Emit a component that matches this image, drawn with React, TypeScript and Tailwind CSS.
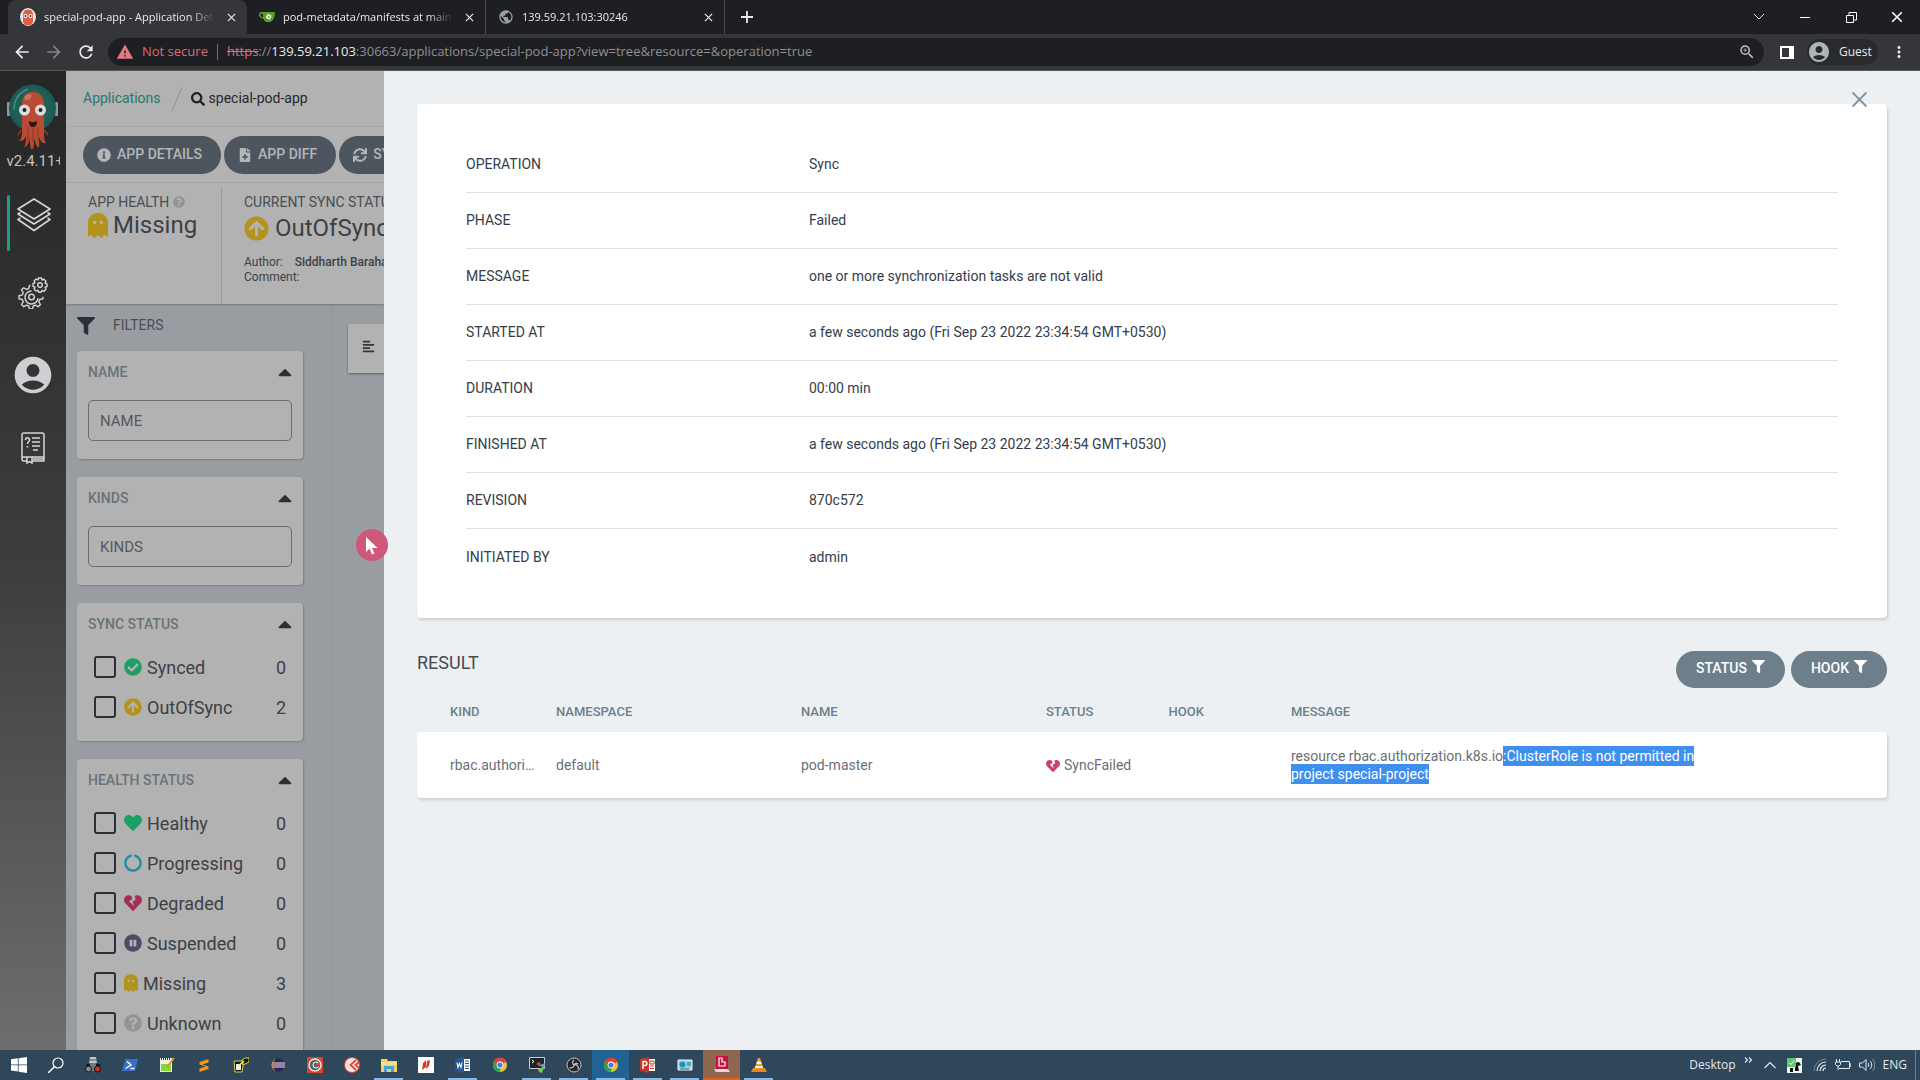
import type { ReactNode } from 'react'
import clsx from 'clsx'
import {
  FaAlignLeft,
  FaArrowCircleUp,
  FaCaretUp,
  FaCheckCircle,
  FaCircleNotch,
  FaFileMedical,
  FaFilter,
  FaGhost,
  FaHeart,
  FaHeartBroken,
  FaInfoCircle,
  FaPauseCircle,
  FaQuestionCircle,
  FaSearch,
  FaSync,
} from 'react-icons/fa'
import { MdAccountCircle, MdArrowBack, MdArrowForward, MdMoreVert, MdPublic, MdRefresh, MdWarning, MdZoomIn } from 'react-icons/md'

/* ---------- browser chrome ---------- */

function ArgoLogo({ className }: { className?: string }) {
  return (
    <svg viewBox="0 0 52 66" className={className} aria-hidden="true">
      <rect x="0" y="19" width="3" height="14" rx="1" fill="#8b999d" />
      <rect x="48" y="19" width="3" height="14" rx="1" fill="#8b999d" />
      <circle cx="25.500" cy="25" r="23.500" fill="#1c5a58" />
      <circle cx="25.500" cy="25" r="20" fill="#1f5f58" />
      <path d="M7 27C7 16 13 9 21 6" stroke="#4f8886" strokeWidth="1.500" fill="none" />
      <path
        d="M26 9c-8 0-11 6-11 13v27c0 5-1 7-3 9 4 0 6-2 7-5 0 5 0 8-2 11 4-1 5-5 6-9 0 4 0 8 1 11h2c1-3 1-7 1-11 1 4 2 7 4 10 2-2 1-6 1-11 2 5 4 7 7 6-2-2-2-6-2-11V22c0-7-3-13-11-13z"
        fill="#b94a34"
      />
      <path d="M14 47l-3 5M37 47l4 5M21 44v14M26 45v14M31 44v14" stroke="#9a3c2b" strokeWidth="1.400" />
      <ellipse cx="21" cy="14" rx="4" ry="2.500" fill="#cf705b" transform="rotate(-30 21 14)" />
      <circle cx="17.500" cy="27" r="5.500" fill="#dcdcdc" />
      <circle cx="33.500" cy="27" r="5.500" fill="#dcdcdc" />
      <circle cx="17.500" cy="27" r="2" fill="#222" />
      <circle cx="33.500" cy="27" r="2" fill="#222" />
      <path d="M22 38c2 1.500 6 1.500 8 0 0 4-1.500 6-4 6s-4-2-4-6z" fill="#2a1512" />
    </svg>
  )
}

function FaviconArgo() {
  return (
    <svg viewBox="0 0 16 20" className="w-4 h-5 shrink-0" aria-hidden="true">
      <ellipse cx="8" cy="10" rx="8" ry="9" fill="#e9e3e1" />
      <path d="M8 2.500c-4 0-5 3-5 6V15l2 3h6l2-3V8.500c0-3-1-6-5-6z" fill="#df5f45" />
      <circle cx="5.500" cy="9" r="2" fill="#fff" />
      <circle cx="10.500" cy="9" r="2" fill="#fff" />
      <circle cx="5.500" cy="9" r="1" fill="#333" />
      <circle cx="10.500" cy="9" r="1" fill="#333" />
    </svg>
  )
}

function FaviconGitea() {
  return (
    <svg viewBox="0 0 16 16" className="w-4 h-4 shrink-0" aria-hidden="true">
      <path d="M3.500 3H15c.8 0 1 .5 1 1.200C15.500 9 13.500 13 10.500 13H8C6 13 5 11.500 4.500 9.800 1.500 9.500 0 7.500 0 5.500S1.500 3 3.500 3zM3.800 4.700C2.300 4.500 1.500 5 1.600 6s1 2 2.500 2.200z" fill="#5c9e2a" />
      <rect x="7.500" y="5.500" width="4.500" height="4.500" rx="1" fill="#fff" transform="rotate(25 9.700 7.700)" />
      <circle cx="9.800" cy="8" r="1" fill="#5c9e2a" />
    </svg>
  )
}

function CloseIcon({ className }: { className?: string }) {
  return (
    <svg viewBox="0 0 10 10" className={className} fill="none" stroke="currentColor" aria-hidden="true">
      <path d="M1 1l8 8M9 1l-8 8" strokeWidth="1.300" />
    </svg>
  )
}

function Tab({ icon, title, active, divider }: { icon: ReactNode; title: string; active?: boolean; divider?: boolean }) {
  return (
    <div
      className={clsx(
        'flex items-center h-[34px] w-[239px] pl-3 pr-[7px] gap-2 text-[#e8eaed]',
        active && 'bg-[#35363a] rounded-t-lg',
        divider && 'border-r border-[#4a4b4f]'
      )}
    >
      {icon}
      <span className="flex-1 overflow-hidden whitespace-nowrap text-[11px] [mask-image:linear-gradient(to_right,black_85%,transparent)]">
        {title}
      </span>
      <button type="button" aria-label="Close tab" className="p-1">
        <CloseIcon className="size-[9px]" />
      </button>
    </div>
  )
}

function BrowserBar() {
  return (
    <header className="shrink-0 font-['Open_Sans',sans-serif] bg-[#1e1f22]">
      <div className="flex items-center h-[34px] pl-2 text-[#e8eaed]">
        <Tab active icon={<FaviconArgo />} title="special-pod-app - Application Details" />
        <Tab divider icon={<FaviconGitea />} title="pod-metadata/manifests at main" />
        <Tab divider icon={<MdPublic className="size-4 text-[#9aa0a6]" />} title="139.59.21.103:30246" />
        <button type="button" aria-label="New tab" className="p-4">
          <svg viewBox="0 0 12 12" className="size-3" stroke="currentColor" strokeWidth="1.800" aria-hidden="true">
            <path d="M6 0v12M0 6h12" />
          </svg>
        </button>
        <div className="ml-auto flex items-center">
          <button type="button" aria-label="Search tabs" className="w-[46px] flex justify-center">
            <svg viewBox="0 0 12 8" className="w-3 h-2" fill="none" stroke="currentColor" aria-hidden="true">
              <path d="M1 1l5 5 5-5" />
            </svg>
          </button>
          <button type="button" aria-label="Minimize" className="w-[46px] flex justify-center">
            <span className="w-[10px] h-px bg-white" />
          </button>
          <button type="button" aria-label="Restore" className="w-[46px] flex justify-center">
            <svg viewBox="0 0 11 11" className="size-[11px]" fill="none" stroke="#fff" aria-hidden="true">
              <path d="M.5 3.500h7v7h-7zM3 3V.5h7.500v7.500H8" />
            </svg>
          </button>
          <button type="button" aria-label="Close" className="w-[46px] flex justify-center">
            <CloseIcon className="size-3 text-white" />
          </button>
        </div>
      </div>

      <div className="flex items-center h-[37px] bg-[#35363a] border-b border-[#55565a] text-[#e8eaed] pl-3">
        <button type="button" aria-label="Back"><MdArrowBack className="size-5" /></button>
        <button type="button" aria-label="Forward" className="ml-3 text-[#85878b]"><MdArrowForward className="size-5" /></button>
        <button type="button" aria-label="Reload" className="ml-3"><MdRefresh className="size-5" /></button>
        <div className="flex-1 flex items-center h-7 ml-3 pl-2 pr-2 rounded-full bg-[#1e1f22] text-[13px]">
          <MdWarning className="size-[18px] text-[#e47883]" />
          <span className="ml-2 text-[#dd6a79]">Not secure</span>
          <span className="mx-[9px] h-4 w-px bg-[#6b6c70]" />
          <span className="text-[#8d9095] whitespace-nowrap">
            <span className="text-[#dd6a79] line-through">https</span>://
            <span className="text-[#e8eaed]">139.59.21.103</span>
            :30663/applications/special-pod-app?view=tree&amp;resource=&amp;operation=true
          </span>
          <MdZoomIn className="size-[18px] ml-auto text-[#bdc1c6]" />
        </div>
        <span className="ml-4 w-[14px] h-[13px] border-2 border-r-[5px] border-white" />
        <div className="flex items-center gap-2 h-[26px] w-[71px] ml-[13px] rounded-full bg-[#292a2d] text-[12px]">
          <MdAccountCircle className="size-6 text-[#b0b4ba]" />
          Guest
        </div>
        <button type="button" aria-label="Menu" className="mx-3"><MdMoreVert className="size-[18px]" /></button>
      </div>
    </header>
  )
}

/* ---------- argo sidebar ---------- */

function LayersIcon() {
  return (
    <svg viewBox="0 0 34 34" className="size-[34px]" fill="none" stroke="#d6d6d6" strokeWidth="1.600" strokeLinejoin="round" aria-hidden="true">
      <path d="M17 1L33 11 17 21 1 11z" />
      <path d="M3.500 14.500L1 16l16 10 16-10-2.500-1.500" />
      <path d="M3.500 20L1 21.500l16 11 16-11L30.500 20" />
    </svg>
  )
}

function GearsIcon() {
  return (
    <svg viewBox="0 0 32 32" className="size-8" fill="none" stroke="#d6d6d6" strokeWidth="1.400" strokeLinejoin="round" aria-hidden="true">
      <path d="M13.500 8.500h-1l-.8 3-2.200.9-2.700-1.600L4.500 13l1.700 2.700-.9 2.200-3.300.8v3l3.300.8.9 2.300-1.700 2.700 2.300 2.200 2.700-1.600 2.200.9.800 3h3l.8-3 2.200-.9 2.700 1.600 2.300-2.200-1.700-2.700.9-2.300 3.300-.8v-2" />
      <path d="M14.500 14a6.500 6.500 0 106.500 7" />
      <circle cx="14.500" cy="20" r="2.800" />
      <path d="M21.500 1h3l.5 2 2-.8 2 2-1 1.800 2 1v2.500l-2 .8 1 2-2 2-2-1-.8 2h-2.500l-.7-2-2 .8-2-2 1-1.900-2-.8V6.500l2-.7-.9-1.900 2-1.900 1.900 1z" />
      <circle cx="23" cy="8" r="2.300" />
    </svg>
  )
}

function BookIcon() {
  return (
    <svg viewBox="0 0 24 32" className="w-6 h-8" fill="none" stroke="#d6d6d6" strokeWidth="1.500" aria-hidden="true">
      <path d="M6 29H3a2 2 0 01-2-2V3a2 2 0 012-2h18a2 2 0 012 2v26H11M1 25h22M6 25v6l2.500-1.500L11 31v-6M12 27h11" />
      <path d="M11 6h8M11 10h8M11 14h8M12 18h5" />
      <path d="M4.500 8c0-3 4-3 4 0 0 2-2 1.600-2 4M6.500 14v1.500" />
    </svg>
  )
}

function Sidebar() {
  return (
    <nav className="w-[66px] shrink-0 flex flex-col items-center pt-3 bg-linear-to-b from-[#262626] via-[#3d3d3d] to-[#6e6e6e] text-[#c4c4c4]">
      <ArgoLogo className="w-[52px] h-[66px]" />
      <span className="w-[53px] overflow-hidden whitespace-nowrap text-[15px] leading-6">v2.4.11+</span>
      <a href="#applications" aria-label="Applications" className="mt-[22px] w-full h-14 pl-[7px] pr-[9px] flex">
        <span className="w-[3px] h-14 bg-[#1f9d8a] rounded-sm" />
        <span className="flex-1 flex justify-center pt-[3px]"><LayersIcon /></span>
      </a>
      <a href="#settings" aria-label="Settings" className="mt-[26px]"><GearsIcon /></a>
      <a href="#user" aria-label="User info" className="mt-[44px]"><MdAccountCircle className="size-[44px] text-[#cfcfd3]" /></a>
      <a href="#docs" aria-label="Documentation" className="mt-[35px]"><BookIcon /></a>
    </nav>
  )
}

/* ---------- application page behind the panel ---------- */

function ToolButton({ icon, children }: { icon: ReactNode; children: ReactNode }) {
  return (
    <button
      type="button"
      className="shrink-0 flex items-center gap-[6px] h-[38px] pl-[14px] pr-[19px] rounded-full bg-[#4d565f] text-[#b4b6b8] text-[14px] font-medium whitespace-nowrap"
    >
      {icon}
      {children}
    </button>
  )
}

function FilterCard({ title, children, className }: { title: string; children: ReactNode; className?: string }) {
  return (
    <section className={clsx('bg-[#b2b2b2] rounded shadow-[1px_1px_2px_rgba(0,0,0,0.2)] px-[11px] pt-3', className)}>
      <div className="flex items-center justify-between h-[18px]">
        <h3 className="text-[14px] font-medium text-[#68727a]">{title}</h3>
        <button type="button" aria-label={`Collapse ${title}`}>
          <FaCaretUp className="size-[22px] -mr-1 text-[#2c2f3a]" />
        </button>
      </div>
      {children}
    </section>
  )
}

function FilterInput({ name }: { name: string }) {
  return (
    <input
      aria-label={name}
      placeholder={name}
      className="block w-full h-[41px] mt-[19px] px-[11px] rounded-[5px] border border-[#6a6c6e] bg-transparent text-[15px] placeholder:text-[#54585c]"
    />
  )
}

type Option = { label: string; count: number; icon: ReactNode }

const syncOptions: Option[] = [
  { label: 'Synced', count: 0, icon: <FaCheckCircle className="size-[18px] text-[#1ba163]" /> },
  { label: 'OutOfSync', count: 2, icon: <FaArrowCircleUp className="size-[18px] text-[#b3931c]" /> },
]

const healthOptions: Option[] = [
  { label: 'Healthy', count: 0, icon: <FaHeart className="size-[18px] text-[#1ba163]" /> },
  { label: 'Progressing', count: 0, icon: <FaCircleNotch className="size-[18px] text-[#1a8c9c]" /> },
  { label: 'Degraded', count: 0, icon: <FaHeartBroken className="size-[18px] text-[#a32f55]" /> },
  { label: 'Suspended', count: 0, icon: <FaPauseCircle className="size-[18px] text-[#4f4a68]" /> },
  { label: 'Missing', count: 3, icon: <FaGhost className="w-[14px] h-[18px] text-[#b3931c]" preserveAspectRatio="none" /> },
  { label: 'Unknown', count: 0, icon: <FaQuestionCircle className="size-[18px] text-[#8f9499]" /> },
]

function OptionList({ options }: { options: Option[] }) {
  return (
    <div className="pt-[14px] pl-[6px] pr-[6px]">
      {options.map((o) => (
        <label key={o.label} className="flex items-center h-10 text-[18px] text-[#3d4046]">
          <input type="checkbox" className="appearance-none size-[22px] border-2 border-[#2c2f38] rounded-[3px] mr-2" />
          {o.icon}
          <span className="ml-[5px]">{o.label}</span>
          <span className="ml-auto">{o.count}</span>
        </label>
      ))}
    </div>
  )
}

function AppPage() {
  return (
    <main className="w-[318px] shrink-0 flex flex-col overflow-hidden bg-[#b2b2b2] text-[#3d4046]">
      <div className="flex items-center h-14 shrink-0 pl-[17px] border-b border-[#a5a7a9] text-[14px] whitespace-nowrap">
        <a href="#applications" className="text-[#1f7a6f]">Applications</a>
        <svg viewBox="0 0 12 24" className="w-3 h-6 ml-[10px]" stroke="#8d9093" aria-hidden="true">
          <path d="M11 0L1 24" />
        </svg>
        <FaSearch className="size-[14px] ml-2 text-[#1f2126]" />
        <span className="ml-1 text-[#26282e]">special-pod-app</span>
      </div>
      <div className="flex items-center h-14 shrink-0 gap-[3px] pl-[17px] border-b border-[#a5a7a9]">
        <ToolButton icon={<FaInfoCircle className="size-[14px]" />}>APP DETAILS</ToolButton>
        <ToolButton icon={<FaFileMedical className="size-[14px]" />}>APP DIFF</ToolButton>
        <ToolButton icon={<FaSync className="size-[14px]" />}>SYNC</ToolButton>
      </div>
      <div className="flex h-[121px] shrink-0 pt-1 whitespace-nowrap shadow-[0_1px_2px_rgba(0,0,0,0.25)] relative">
        <div className="w-[156px] shrink-0 pl-[22px] pt-[6px] border-r border-[#9b9da0]">
          <div className="flex items-center gap-1 text-[14px] leading-[18px] text-[#494d52]">
            APP HEALTH <FaQuestionCircle className="size-3 text-[#8f9499]" />
          </div>
          <div className="flex items-center gap-[5px] text-[24px] leading-7">
            <FaGhost className="w-5 h-[25px] text-[#b3931c]" preserveAspectRatio="none" />
            Missing
          </div>
        </div>
        <div className="pl-[22px] pt-[6px]">
          <div className="text-[14px] leading-[18px] text-[#494d52]">CURRENT SYNC STATUS</div>
          <div className="flex items-center gap-[6px] text-[24px] leading-7 pt-[3px]">
            <FaArrowCircleUp className="size-[25px] text-[#b3931c]" />
            OutOfSync
          </div>
          <div className="flex gap-3 pt-[13px] text-[12px] leading-[15px]">
            <span>Author:</span>
            <span className="font-medium">Siddharth Barahalikar</span>
          </div>
          <div className="text-[12px] leading-[15px]">Comment:</div>
        </div>
      </div>

      <div className="flex-1 min-h-0 flex bg-[#999da2]">
        <aside className="w-[266px] shrink-0 pl-[11px] pr-[28px] border-r border-[#8f9398] overflow-hidden">
          <div className="flex items-center h-[47px] pb-1 gap-[18px] text-[14px] text-[#4a4e54]">
            <FaFilter className="size-[18px] text-[#2c2f3a]" />
            FILTERS
          </div>
          <div className="flex flex-col gap-[18px]">
            <FilterCard title="NAME" className="h-[108px]"><FilterInput name="NAME" /></FilterCard>
            <FilterCard title="KINDS" className="h-[108px]"><FilterInput name="KINDS" /></FilterCard>
            <FilterCard title="SYNC STATUS" className="pb-[14px]"><OptionList options={syncOptions} /></FilterCard>
            <FilterCard title="HEALTH STATUS" className="pb-[14px]"><OptionList options={healthOptions} /></FilterCard>
          </div>
        </aside>
        <div className="pt-5 pl-4">
          <button type="button" aria-label="Compact view" className="w-12 h-[49px] pl-[14px] pb-1 bg-[#b2b2b2] shadow-[0_1px_2px_rgba(0,0,0,0.4)]">
            <FaAlignLeft className="size-[13px] text-[#33363d]" />
          </button>
        </div>
      </div>
    </main>
  )
}

/* ---------- operation panel ---------- */

const operation = [
  ['OPERATION', 'Sync'],
  ['PHASE', 'Failed'],
  ['MESSAGE', 'one or more synchronization tasks are not valid'],
  ['STARTED AT', 'a few seconds ago (Fri Sep 23 2022 23:34:54 GMT+0530)'],
  ['DURATION', '00:00 min'],
  ['FINISHED AT', 'a few seconds ago (Fri Sep 23 2022 23:34:54 GMT+0530)'],
  ['REVISION', '870c572'],
  ['INITIATED BY', 'admin'],
]

function FilterButton({ children }: { children: ReactNode }) {
  return (
    <button type="button" className="flex gap-[5px] h-[37px] px-5 pt-[6px] rounded-full bg-[#6d7f8b] text-white text-[14px] leading-[22px] font-medium">
      {children}
      <FaFilter className="size-[13px] mt-[3px]" />
    </button>
  )
}

function OperationPanel() {
  return (
    <section className="flex-1 min-w-0 px-[33px] pt-[33px] bg-[#ecf0f3] relative">
      <button type="button" aria-label="Close panel" className="absolute right-[53px] top-[21px] text-[#7f8f99]">
        <svg viewBox="0 0 14 14" className="size-[15px]" stroke="currentColor" strokeWidth="1.800" aria-hidden="true">
          <path d="M.5.5l13 13M13.500.5l-13 13" />
        </svg>
      </button>
      <div className="bg-white rounded px-[49px] py-[33px] shadow-[1px_2px_3px_rgba(0,0,0,0.15)]">
        <dl className="text-[14px] text-[#363c4a]">
          {operation.map(([label, value], i) => (
            <div key={label} className={clsx('grid grid-cols-4 items-center h-14', i < operation.length - 1 && 'border-b border-[#dee1e3]')}>
              <dt>{label}</dt>
              <dd className="col-span-3">{value}</dd>
            </div>
          ))}
        </dl>
      </div>

      <div className="flex items-start justify-between pt-[33px]">
        <h2 className="text-[18px] leading-6 text-[#444b52]">RESULT</h2>
        <div className="flex gap-[6px]">
          <FilterButton>STATUS</FilterButton>
          <FilterButton>HOOK</FilterButton>
        </div>
      </div>

      <table className="w-full table-fixed text-left">
        <colgroup>
          <col className="w-[139px]" />
          <col className="w-1/6" />
          <col className="w-1/6" />
          <col className="w-1/12" />
          <col className="w-1/12" />
          <col />
        </colgroup>
        <thead className="text-[13px] text-[#6d7f8b]">
          <tr className="h-11 *:pt-1">
            <th className="pl-[33px] font-medium">KIND</th>
            <th className="font-medium">NAMESPACE</th>
            <th className="font-medium">NAME</th>
            <th className="font-medium">STATUS</th>
            <th className="font-medium">HOOK</th>
            <th className="font-medium">MESSAGE</th>
          </tr>
        </thead>
        <tbody className="text-[14px] leading-[18px] text-[#6a7075]">
          <tr className="h-[66px] bg-white rounded shadow-[1px_2px_3px_rgba(0,0,0,0.15)]">
            <td className="pl-[33px] pr-4 truncate rounded-l">rbac.authorization.k8s.io</td>
            <td>default</td>
            <td>pod-master</td>
            <td className="whitespace-nowrap">
              <FaHeartBroken className="inline size-[14px] mr-1 text-[#d0406f]" />
              SyncFailed
            </td>
            <td />
            <td className="pr-[150px] rounded-r">
              resource rbac.authorization.k8s.io
              <span className="bg-[#3f8fee] text-white py-[2px]">:ClusterRole is not permitted in project special-project</span>
            </td>
          </tr>
        </tbody>
      </table>
    </section>
  )
}

/* ---------- windows taskbar ---------- */

function Svg({ children }: { children: ReactNode }) {
  return (
    <svg viewBox="0 0 16 16" className="size-4" aria-hidden="true">
      {children}
    </svg>
  )
}

const chromeIcon = (
  <Svg>
    <circle cx="8" cy="8" r="7" fill="#f2c230" />
    <path d="M8 8L2 4.400A7 7 0 0114.500 5z" fill="#dc4437" />
    <path d="M8 8L1.900 4.500A7 7 0 007.500 15L10 9z" fill="#2ba24c" />
    <path d="M8 5h6.500A7 7 0 002 4.400L5 9z" fill="#dc4437" />
    <circle cx="8" cy="8" r="3.400" fill="#fff" />
    <circle cx="8" cy="8" r="2.600" fill="#3f7de8" />
  </Svg>
)

const apps: { name: string; icon: ReactNode; open?: boolean; className?: string }[] = [
  { name: 'Start', icon: <Svg><path d="M0 2.300L6.800 1.300v6.200H0zM7.600 1.200L16 0v7.500H7.600zM0 8.300h6.800v6.200L0 13.500zM7.600 8.300H16V16l-8.400-1.200z" fill="#fff" /></Svg> },
  { name: 'Search', icon: <Svg><circle cx="10" cy="6" r="5" fill="none" stroke="#fff" strokeWidth="1.200" /><path d="M6.500 9.500L0 16" stroke="#fff" strokeWidth="1.500" /></Svg> },
  { name: 'Spy', icon: <Svg><path d="M5 0h6l1 6H4z" fill="#bfc3c2" /><path d="M4 3h8" stroke="#555" /><path d="M1 7h14v3H1z" fill="#16181a" /><path d="M5 6h6v8H5z" fill="#777" /><circle cx="3.500" cy="12" r="3" fill="#7790a2" stroke="#111" /><circle cx="12.500" cy="12" r="3" fill="#d32f2f" stroke="#111" /></Svg> },
  { name: 'PowerShell', icon: <Svg><path d="M3.500 2H16l-3 12H0z" fill="#3c6fc8" /><path d="M5 4.500L9 8l-5.500 3.500M8.500 11.500h4" stroke="#fff" strokeWidth="1.400" fill="none" /></Svg> },
  { name: 'Notepad++', icon: <Svg><path d="M1 1h12v14H1z" fill="#eef3e4" /><path d="M2 2h10" stroke="#333" strokeWidth="2" strokeDasharray="1 1" /><path d="M2 7h10v7H2z" fill="#85d83c" /><path d="M15 1L8 10" stroke="#d99a26" strokeWidth="2" /></Svg> },
  { name: 'Sublime Text', icon: <Svg><path d="M3.500 5l9-3v3.500L6.500 7.500l6 2v2.500l-9 3v-3.500l6-2-6-2z" fill="#f29421" /></Svg> },
  { name: 'PuTTY', icon: <Svg><path d="M1 4h9v5l-1 6H2zM9 3l3-2h4v4l-6 3z" fill="#15160d" stroke="#d6d84f" /><path d="M3 7h5v6H3z" fill="#eee" /><path d="M5 9l6-5" stroke="#eef055" strokeWidth="1.500" /></Svg> },
  { name: 'Eclipse', icon: <Svg><circle cx="8.500" cy="8" r="6.500" fill="#2c2255" /><path d="M2 6h13M2 8h13M2 10h13" stroke="#f2eef5" /><path d="M5 2.500A6.500 6.500 0 005 13.500" stroke="#e08b4b" fill="none" /></Svg> },
  { name: 'Recorder', icon: <Svg><path d="M0 0h16v16H0z" fill="#d6432f" /><circle cx="8" cy="8" r="6" fill="#56616a" stroke="#e9e4e2" strokeWidth="1.500" /><circle cx="9" cy="8" r="3" fill="none" stroke="#fff" /><path d="M9 8l4-3v6z" fill="#d6432f" /></Svg> },
  { name: 'Camtasia', icon: <Svg><circle cx="8" cy="8" r="8" fill="#dd4a3c" /><circle cx="8" cy="8" r="7" fill="#f6e3df" /><path d="M12 3L6.500 8l5.500 5M15 5l-3.500 3 3.500 3" fill="none" stroke="#dd4a3c" strokeWidth="1.800" /></Svg> },
  { name: 'File Explorer', open: true, icon: <Svg><path d="M0 2h6l1 2h9v11H0z" fill="#f4cf63" /><path d="M0 5h16v3H0z" fill="#f9e08d" /><path d="M3 9h10v6h-3v-3H6v3H3z" fill="#3fa3dc" /></Svg> },
  { name: 'Reader', icon: <Svg><path d="M0 0h16v16H0z" fill="#fff" /><path d="M5 6l3-3v7l-4 3zM9 4l3-1-1 6-3 3z" fill="#d33a2c" /></Svg> },
  { name: 'Word', open: true, icon: <Svg><path d="M8 2h7v12H8z" fill="#fff" /><path d="M10 4h4M10 6.500h4M10 9h4M10 11.500h4" stroke="#2a5699" /><path d="M0 2l9-2v16l-9-2z" fill="#2a5699" /><path d="M2 5.500l1 5 1.500-4 1.500 4 1-5" fill="none" stroke="#fff" strokeWidth="1.100" /></Svg> },
  { name: 'Chrome', icon: chromeIcon },
  { name: 'MobaXterm', open: true, icon: <Svg><path d="M.5.5h15v11H.5z" fill="#202326" stroke="#c7cbcd" /><path d="M3 3l2 1.500L3 6" stroke="#fff" fill="none" /><path d="M7 7l4-2 1 5z" fill="#e0483a" /><path d="M11 8l5-2-1 7z" fill="#4d9fe8" /><path d="M9 12l6-2-2 6-3-1z" fill="#7ccc42" /></Svg> },
  { name: 'OBS', open: true, icon: <Svg><circle cx="8" cy="8" r="7" fill="#24262a" stroke="#c2c5c8" /><path d="M8 3a3 3 0 000 5 3 3 0 014 4M8 8a3 3 0 01-4.500 2.500M8 8c1-2 3-2 4-1" fill="none" stroke="#c2c5c8" strokeWidth="1.300" /></Svg> },
  { name: 'Chrome window', open: true, className: 'bg-[#226394]', icon: chromeIcon },
  { name: 'PowerPoint', open: true, icon: <Svg><path d="M8 2h7v12H8z" fill="#fff" /><path d="M10 4h4v3h-4zM10 9h4M10 11.500h4" stroke="#c43e2b" fill="none" /><path d="M0 2l9-2v16l-9-2z" fill="#c2392b" /><path d="M3 12V4.500h2c2.500 0 2.500 4 0 4H3" fill="none" stroke="#fff" strokeWidth="1.400" /></Svg> },
  { name: 'Control Panel', open: true, icon: <Svg><path d="M1 3h14v10H1z" fill="#8fd6ea" stroke="#e9f7fb" /><circle cx="5.500" cy="7.500" r="3" fill="#2d8fae" /><path d="M10 6h4M10 8h4M3 12h9" stroke="#2d6f8e" /></Svg> },
  { name: 'Editor', className: 'bg-[#8f6650] border-b-2 border-[#e2641c]', icon: <Svg><path d="M2 0h12v13H2z" fill="#c8103c" /><path d="M5 2v8h6V6H8V2z" fill="none" stroke="#fff" strokeWidth="1.200" /><path d="M0 13h14l2 3H2z" fill="#f1d7dc" /></Svg> },
  { name: 'VLC', open: true, icon: <Svg><path d="M2 11h12l2 4H0z" fill="#e8871c" /><path d="M7 1h2l3.500 11h-9z" fill="#f09a2c" /><path d="M6 4.500h4l.8 2.500H5.200zM4.500 9h7l.6 2H3.900z" fill="#efefef" /></Svg> },
]

function Taskbar() {
  return (
    <footer className="shrink-0 flex h-[30px] bg-[#2f475b] font-['Open_Sans',sans-serif] text-[#e4e8eb]">
      {apps.map((app) => (
        <button
          key={app.name}
          type="button"
          aria-label={app.name}
          className={clsx('relative w-[37px] flex items-center justify-center', app.className)}
        >
          {app.icon}
          {app.open && <span className="absolute bottom-0 inset-x-1 h-[2px] bg-[#86b9e3]" />}
        </button>
      ))}
      <div className="ml-auto flex items-center gap-2 text-[12px]">
        <span>Desktop</span>
        <svg viewBox="0 0 9 6" className="w-[9px] h-[6px] -mt-[10px]" fill="none" stroke="currentColor" strokeWidth="1.200" aria-hidden="true">
          <path d="M1 .5L3.500 3 1 5.500M5 .5L7.500 3 5 5.500" />
        </svg>
        <svg viewBox="0 0 12 8" className="w-3 h-2 mx-[3px]" fill="none" stroke="currentColor" strokeWidth="1.200" aria-hidden="true">
          <path d="M.5 7L6 1.500 11.500 7" />
        </svg>
        <svg viewBox="0 0 15 15" className="size-[15px]" aria-hidden="true">
          <path d="M0 0h15v15H0z" fill="#f4f6f4" />
          <path d="M8 5l4-1 2 3-3 1 1 5H8zM3 10h3v4H3z" fill="#111" />
          <path d="M0 0h9v9H0z" fill="#5cc86a" />
          <path d="M2 4.500L4 6.500 7.500 2.500" fill="none" stroke="#fff" />
        </svg>
        <svg viewBox="0 0 14 14" className="size-[14px] ml-[3px]" fill="none" stroke="currentColor" aria-hidden="true">
          <path d="M1 13A12 12 0 0113 1" opacity=".4" />
          <path d="M4 13a9 9 0 019-9M7 13a6 6 0 016-6M10 13a3 3 0 013-3" strokeWidth="1.200" />
        </svg>
        <svg viewBox="0 0 16 12" className="w-4 h-3" fill="none" stroke="currentColor" aria-hidden="true">
          <path d="M6 2.500h8.500v7H4M14.500 5H16v2h-1.500M1.500 0v3M4.500 0v3M.5 3h5v2.500L4 7H2L.5 5.500zM3 7v4" />
        </svg>
        <svg viewBox="0 0 16 14" className="w-4 h-[14px]" fill="none" stroke="currentColor" aria-hidden="true">
          <path d="M.5 5h3L7 1.500v11L3.500 9h-3zM9 5c1 1 1 3 0 4M11 3c2.300 2 2.300 6 0 8" />
          <path d="M13.500 1c3 3 3 9 0 12" opacity=".5" />
        </svg>
        <span>ENG</span>
        <span className="h-[30px] w-px mr-1 bg-[#6f8292]" />
      </div>
    </footer>
  )
}

export default function App() {
  return (
    <div className="h-screen flex flex-col overflow-hidden font-['Roboto',sans-serif]">
      <BrowserBar />
      <div className="flex-1 min-h-0 flex relative">
        <Sidebar />
        <AppPage />
        <OperationPanel />
        {/* mouse pointer with click highlight */}
        <span className="absolute left-[356px] top-[458px] size-8 rounded-full bg-[#cf5879]">
          <svg viewBox="0 0 14 20" className="absolute left-[9px] top-[7px] w-[14px] h-5" aria-hidden="true">
            <path d="M1 1v15l3.500-3.500L7 18.500l2.500-1L7 12h5.500z" fill="#fff" />
          </svg>
        </span>
      </div>
      <Taskbar />
    </div>
  )
}
